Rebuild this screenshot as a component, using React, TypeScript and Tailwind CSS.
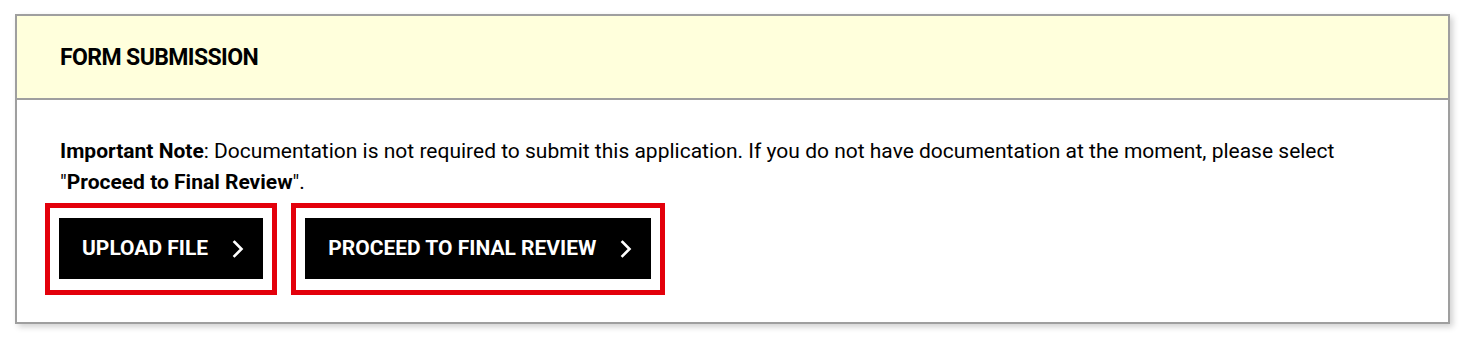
import React from 'react';

const Chevron: React.FC = () => (
    <svg width="14" height="18" viewBox="0 0 14 18" fill="none" className="shrink-0">
        <path d="M3.5 2 L10.5 9 L3.5 16" stroke="#fff" strokeWidth="2.6" strokeLinecap="square" strokeLinejoin="miter" />
    </svg>
);

const ActionButton: React.FC<{ label: string }> = ({ label }) => (
    <div className="border-[5px] border-[#e3000b] px-[9px] pt-[10px] pb-[11px]">
        <button
            type="button"
            className="flex items-center h-[61px] bg-black pl-[23px] pr-[18px] gap-[23px] text-white font-bold text-[21px] uppercase"
        >
            <span>{label}</span>
            <Chevron />
        </button>
    </div>
);

export default function App() {
    return (
        <div className="bg-white w-[1467px] h-[338px] pt-[14px] pl-[15px]" style={{ fontFamily: 'Roboto, "Noto Sans", Arial, sans-serif' }}>
            <div className="w-[1435px] border-2 border-[#9f9f9f] bg-white shadow-[3px_3px_6px_rgba(0,0,0,0.18)]">
                <div className="h-[84px] bg-[#ffffdc] border-b-2 border-[#9f9f9f] flex items-center pl-[43px] pt-[2px]">
                    <h2 className="text-[23px] font-bold text-black tracking-[-0.6px] uppercase">Form Submission</h2>
                </div>
                <div className="pt-[36px] pb-[27px] px-[28px]">
                    <p className="px-[15px] text-[21px] leading-[31px] text-black">
                        <strong className="font-bold">Important Note</strong>: Documentation is not required to submit this application. If you do not have documentation at the moment, please select "<strong className="font-bold">Proceed to Final Review</strong>".
                    </p>
                    <div className="flex gap-[14px] mt-[5px]">
                        <ActionButton label="Upload File" />
                        <ActionButton label="Proceed to Final Review" />
                    </div>
                </div>
            </div>
        </div>
    );
}
